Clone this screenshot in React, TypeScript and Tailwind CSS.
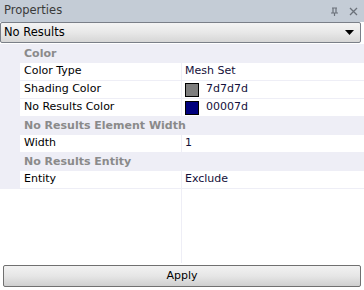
const font = { fontFamily: '"DejaVu Sans", Verdana, sans-serif' };

type Row =
  | { kind: "cat"; label: string }
  | { kind: "prop"; label: string; value: string; swatch?: string };

const rows: Row[] = [
  { kind: "cat", label: "Color" },
  { kind: "prop", label: "Color Type", value: "Mesh Set" },
  { kind: "prop", label: "Shading Color", value: "7d7d7d", swatch: "#7d7d7d" },
  { kind: "prop", label: "No Results Color", value: "00007d", swatch: "#00007d" },
  { kind: "cat", label: "No Results Element Width" },
  { kind: "prop", label: "Width", value: "1" },
  { kind: "cat", label: "No Results Entity" },
  { kind: "prop", label: "Entity", value: "Exclude" },
];

export default function App() {
  return (
    <div
      className="w-[364px] h-[290px] flex flex-col bg-white text-[11px] overflow-hidden"
      style={font}
    >
      {/* Title bar */}
      <div className="h-[22px] bg-[#c4ccd6] flex items-center justify-between pl-[4px] pr-[6px] text-[11.5px] text-[#3a3a3a]">
        <span>Properties</span>
        <div className="flex items-center gap-[10px] text-[#6b717a]">
          <svg width="9" height="9" viewBox="0 0 9 9">
            <path d="M2 1h5M3 1v5M6 1v5M1 6h7M4.5 6v3" stroke="currentColor" strokeWidth="1.2" fill="none" />
          </svg>
          <svg width="9" height="9" viewBox="0 0 9 9">
            <path d="M1 1l7 7M8 1l-7 7" stroke="currentColor" strokeWidth="1.3" fill="none" />
          </svg>
        </div>
      </div>

      {/* Dropdown */}
      <div className="h-[21px] mr-[3px] border border-[#7a7f88] rounded-[2px] flex items-center justify-between pl-[3px] pr-[6px] bg-gradient-to-b from-[#f4f4f4] via-[#e8e8e8] to-[#d6d6d6] text-[11.5px] text-black">
        <span>No Results</span>
        <svg width="9" height="5" viewBox="0 0 9 5">
          <path d="M0 0h9L4.5 5z" fill="#000" />
        </svg>
      </div>

      {/* Grid */}
      <div className="flex-1 flex flex-col mt-[1px]">
        <div className="bg-[#eeeef6] flex flex-col pt-[1px]">
          {rows.map((row, i) =>
            row.kind === "cat" ? (
              <div
                key={i}
                className="h-[18px] flex items-center pl-[24px] font-bold text-[#8a8a8a]"
              >
                {row.label}
              </div>
            ) : (
              <div key={i} className="h-[18px] ml-[20px] flex border-b border-[#eeeef6]">
                <div className="w-[162px] bg-white border-r border-[#eeeef6] flex items-center pl-[4px] text-black">
                  {row.label}
                </div>
                <div className="flex-1 bg-white flex items-center pl-[3px] text-[#14103a]">
                  {row.swatch && (
                    <span
                      className="w-[14px] h-[14px] border border-black mr-[7px]"
                      style={{ backgroundColor: row.swatch }}
                    />
                  )}
                  {row.value}
                </div>
              </div>
            )
          )}
        </div>
        <div className="flex-1 flex">
          <div className="w-[182px] border-r border-[#eeeef6]" />
          <div className="flex-1" />
        </div>
      </div>

      {/* Apply */}
      <div className="pt-[2px] pb-[3px] px-[3px]">
        <button className="w-full h-[22px] border border-[#707070] rounded-[2px] bg-gradient-to-b from-[#f2f2f2] via-[#e6e6e6] to-[#cfcfcf] text-[11px] text-black" style={font}>
          Apply
        </button>
      </div>
    </div>
  );
}
